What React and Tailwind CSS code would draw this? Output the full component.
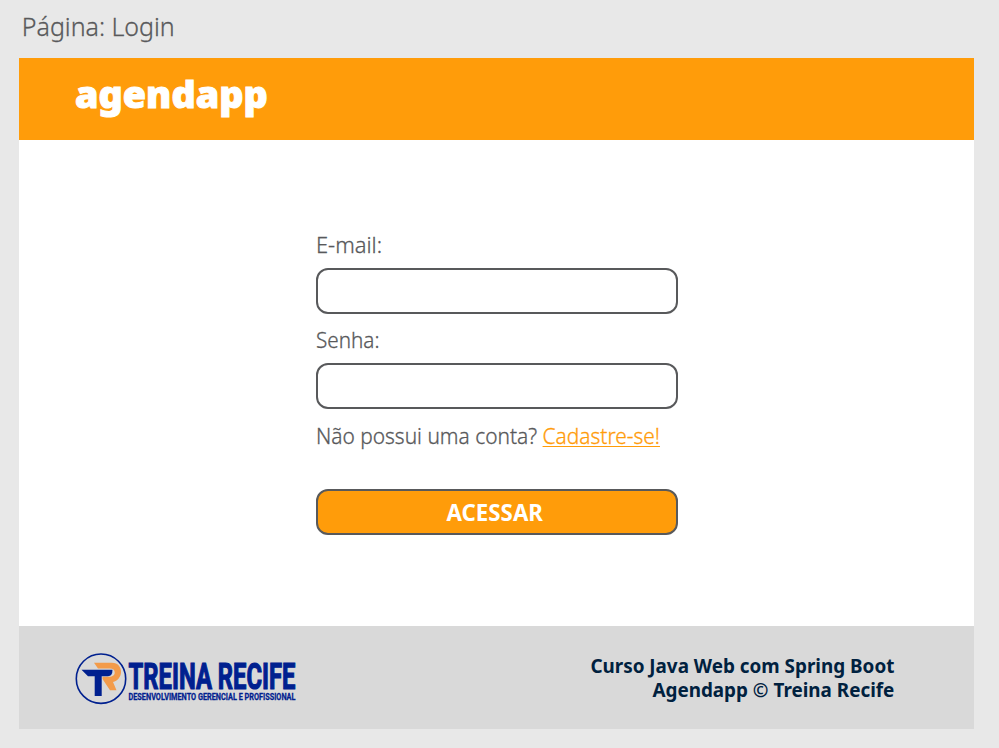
import React from "react";

function Field({ label, type, labelClass }) {
  return (
    <label className="block h-[95.3px]">
      <span className={`relative -top-px block h-[38px] w-max origin-left text-[22px] leading-[30px] font-light [-webkit-text-stroke:0.3px_#58595b] ${labelClass}`}>{label}</span>
      <input type={type} className="block h-[46px] w-[361.5px] rounded-[12px] border-2 border-[#58595b] bg-white px-3 outline-none" />
    </label>
  );
}

function Logo() {
  return (
    <svg width="226" height="60" viewBox="74 651 226 60" className="block overflow-visible">
      <circle cx="101" cy="677.7" r="24.7" fill="none" stroke="#00208f" strokeWidth="1.6" />
      <path d="M94 661.7H112C118 661.7 121 666 121 671C121 676 117.5 680 113 681L116.5 689.2H110L102.5 678V675.8H109C113 675.8 114.7 674 114.7 671.5C114.7 669 113 667.5 110 667.5H98Z" fill="#f39b4a" />
      <path d="M81.5 668.8H112.5Q112.5 675.2 108 675.2H101.7V695H94.7V675.2H88Z" fill="#00208f" />
      <g fill="#00208f" stroke="#00208f" fontWeight="700" className="font-[Roboto,sans-serif]">
        <text x="128.5" y="688.2" fontSize="36.5" strokeWidth="1.2" textLength="167" lengthAdjust="spacingAndGlyphs">TREINA RECIFE</text>
        <text x="128.5" y="699" fontSize="9.8" strokeWidth="0.3" textLength="167" lengthAdjust="spacingAndGlyphs">DESENVOLVIMENTO GERENCIAL E PROFISSIONAL</text>
      </g>
    </svg>
  );
}

export default function App() {
  return (
    <div className="h-[748px] w-[999px] overflow-hidden bg-[#e8e8e8] pl-[19px] font-['Noto_Sans',sans-serif] text-[#58595b]">
      <h1 className="h-[58px] w-max origin-left scale-x-[0.942] pl-[3px] pt-[8px] text-[26.5px] leading-[36px] font-light [-webkit-text-stroke:0.3px_#58595b]">Página: Login</h1>
      <div className="flex h-[671px] w-[955px] flex-col bg-white">
        <header className="h-[82px] shrink-0 bg-[#ff9c0a] pl-[56px] pt-[11px]">
          <span className="block w-max origin-left scale-x-[1.02] text-[37px] leading-[50px] font-black text-white [-webkit-text-stroke:1px_white]">agendapp</span>
        </header>
        <main className="flex-1 pl-[297px] pt-[90px]">
          <Field label="E-mail:" type="email" labelClass="scale-x-[0.995]" />
          <Field label="Senha:" type="password" labelClass="scale-x-[0.94]" />
          <p className="relative -top-px w-max origin-left scale-x-[0.95] text-[22px] leading-[30px] font-light [-webkit-text-stroke:0.3px]">
            Não possui uma conta?{" "}
            <a className="text-[#ff9c0a] underline decoration-1 underline-offset-2">Cadastre-se!</a>
          </p>
          <button className="mt-[38.4px] block h-[46px] w-[361.5px] rounded-[12px] border-2 border-[#58595b] bg-[#ff9c0a] pr-[4px] text-[23px] font-bold text-white">
            <span className="inline-block scale-x-[0.97]">ACESSAR</span>
          </button>
        </main>
        <footer className="flex h-[103.5px] shrink-0 items-start justify-between bg-[#d9d9d9] pl-[55px] pr-[80px] pt-[26px]">
          <Logo />
          <div className="flex origin-right scale-x-[0.943] flex-col items-end pt-[2px] text-[20px] leading-[24px] font-bold text-[#00213f]">
            <span>Curso Java Web com Spring Boot</span>
            <span>Agendapp © Treina Recife</span>
          </div>
        </footer>
      </div>
    </div>
  );
}
